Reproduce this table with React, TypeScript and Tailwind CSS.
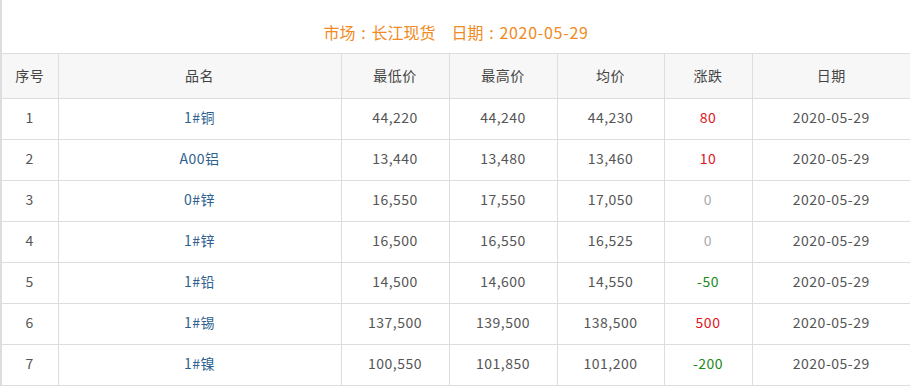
import React from "react";

const rows = [
  { no: 1, name: "1#铜", low: "44,220", high: "44,240", avg: "44,230", chg: "80", date: "2020-05-29" },
  { no: 2, name: "A00铝", low: "13,440", high: "13,480", avg: "13,460", chg: "10", date: "2020-05-29" },
  { no: 3, name: "0#锌", low: "16,550", high: "17,550", avg: "17,050", chg: "0", date: "2020-05-29" },
  { no: 4, name: "1#锌", low: "16,500", high: "16,550", avg: "16,525", chg: "0", date: "2020-05-29" },
  { no: 5, name: "1#铅", low: "14,500", high: "14,600", avg: "14,550", chg: "-50", date: "2020-05-29" },
  { no: 6, name: "1#锡", low: "137,500", high: "139,500", avg: "138,500", chg: "500", date: "2020-05-29" },
  { no: 7, name: "1#镍", low: "100,550", high: "101,850", avg: "101,200", chg: "-200", date: "2020-05-29" },
];

function chgColor(v: string) {
  if (v === "0") return "text-[#aaaaaa]";
  if (v.startsWith("-")) return "text-[#1a8a1a]";
  return "text-[#e0141e]";
}

function Colon() {
  return <span className="inline-block w-[16px] text-center">:</span>;
}

export default function App() {
  return (
    <div
      className="w-[910px] h-[386px] bg-white border-l-2 border-[#dddddd] overflow-hidden"
      style={{ fontFamily: '"Noto Sans CJK SC", "Noto Sans", sans-serif' }}
    >
      {/* Title */}
      <div className="h-[53px] pt-[21px] text-center text-[16px] leading-[22px] text-[#f08a24]">
        市场<Colon />长江现货<span className="inline-block w-[16px]" />日期<Colon />
        <span className="tracking-[0.7px]">2020-05-29</span>
      </div>

      {/* Table */}
      <table className="w-[908px] border-collapse table-fixed text-[14px] tracking-[0.5px] text-[#555555]">
        <colgroup>
          <col className="w-[56px]" />
          <col className="w-[283px]" />
          <col className="w-[108px]" />
          <col className="w-[108px]" />
          <col className="w-[107px]" />
          <col className="w-[88px]" />
          <col className="w-[158px]" />
        </colgroup>
        <thead>
          <tr className="h-[45px] bg-[#f7f7f7] text-[#444444]">
            {["序号", "品名", "最低价", "最高价", "均价", "涨跌", "日期"].map((h, i) => (
              <th
                key={h}
                className={`font-normal text-center pb-[1px] border-y border-[#dddddd] ${i > 0 ? "border-l" : ""}`}
              >
                {h}
              </th>
            ))}
          </tr>
        </thead>
        <tbody>
          {rows.map((r) => (
            <tr key={r.no} className="h-[41px] [&>td]:pb-[3px]">
              <td className="text-center border-b border-[#dddddd]">{r.no}</td>
              <td className="text-center border-b border-l border-[#dddddd] text-[#2f5f8f]">{r.name}</td>
              <td className="text-center border-b border-l border-[#dddddd]">{r.low}</td>
              <td className="text-center border-b border-l border-[#dddddd]">{r.high}</td>
              <td className="text-center border-b border-l border-[#dddddd]">{r.avg}</td>
              <td className={`text-center border-b border-l border-[#dddddd] ${chgColor(r.chg)}`}>{r.chg}</td>
              <td className="text-center border-b border-l border-[#dddddd]">{r.date}</td>
            </tr>
          ))}
        </tbody>
      </table>
    </div>
  );
}
